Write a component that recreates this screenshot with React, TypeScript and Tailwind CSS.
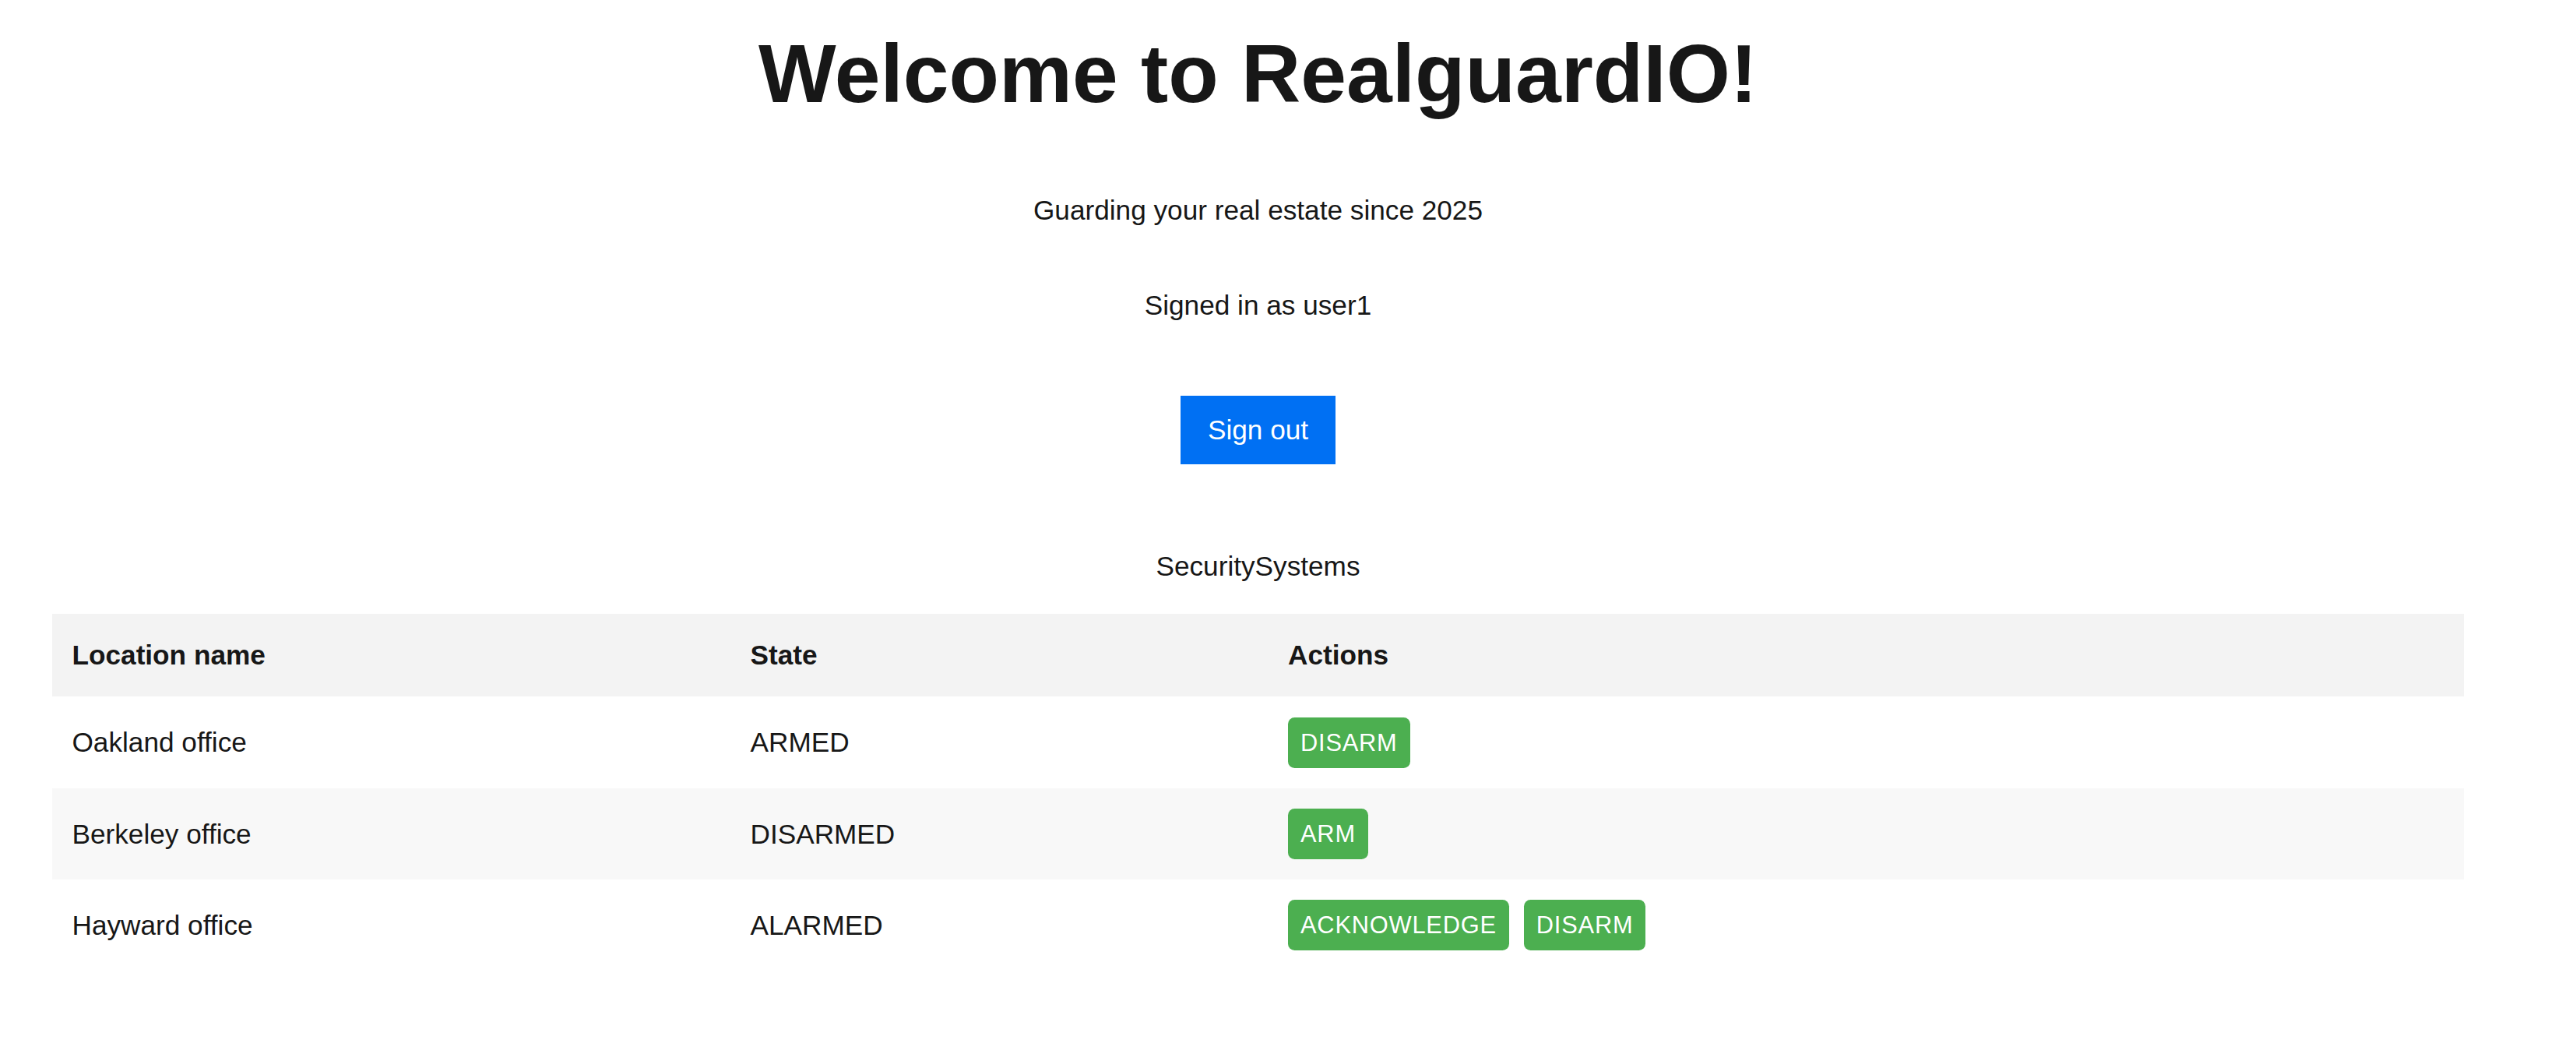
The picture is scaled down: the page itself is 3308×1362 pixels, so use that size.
import React from "react";

type Row = {
  name: string;
  state: string;
  actions: string[];
  bg: string;
  h: string;
};

const rows: Row[] = [
  { name: "Oakland office", state: "ARMED", actions: ["DISARM"], bg: "bg-white", h: "h-[118px]" },
  { name: "Berkeley office", state: "DISARMED", actions: ["ARM"], bg: "bg-[#f8f8f8]", h: "h-[117px]" },
  { name: "Hayward office", state: "ALARMED", actions: ["ACKNOWLEDGE", "DISARM"], bg: "bg-white", h: "h-[117px]" },
];

function ActionButton({ label }: { label: string }) {
  return (
    <button className="flex h-[65px] items-center rounded-[8.5px] bg-[#4caf50] px-[16px] text-[30.8px] leading-[35px] tracking-[0.8px] text-white">
      {label}
    </button>
  );
}

export default function App() {
  return (
    <div className="min-h-[1362px] w-[3231px] bg-white font-['Liberation_Sans',Arial,Helvetica,sans-serif] text-[#171717]">
      <div className="flex flex-col items-center pt-[33px]">
        <h1 className="text-[105.6px] font-bold leading-[122px]">Welcome to RealguardIO!</h1>
        <p className="mt-[95px] text-[35.2px] leading-[40px]">Guarding your real estate since 2025</p>
        <p className="mt-[82px] text-[35.2px] leading-[40px]">Signed in as user1</p>
        <button className="mt-[96px] flex h-[88px] w-[199px] items-center justify-center bg-[#0070f3] text-[35.2px] leading-[40px] text-white">
          Sign out
        </button>
        <p className="mt-[111px] text-[35.2px] leading-[40px]">SecuritySystems</p>
      </div>

      <table className="mx-auto mt-[41px] w-[3097px] table-fixed border-collapse text-[35.2px] leading-[40px]">
        <thead>
          <tr className="h-[106px] bg-[#f3f3f3]">
            <th className="w-[871px] px-[25.5px] text-left font-bold">Location name</th>
            <th className="w-[690.5px] px-[25.5px] text-left font-bold">State</th>
            <th className="px-[25.5px] text-left font-bold">Actions</th>
          </tr>
        </thead>
        <tbody>
          {rows.map((r) => (
            <tr key={r.name} className={`${r.h} ${r.bg}`}>
              <td className="px-[25.5px] align-middle">{r.name}</td>
              <td className="px-[25.5px] align-middle">{r.state}</td>
              <td className="px-[25.5px] align-middle">
                <div className="flex items-center gap-[19px]">
                  {r.actions.map((a) => (
                    <ActionButton key={a} label={a} />
                  ))}
                </div>
              </td>
            </tr>
          ))}
        </tbody>
      </table>
    </div>
  );
}
